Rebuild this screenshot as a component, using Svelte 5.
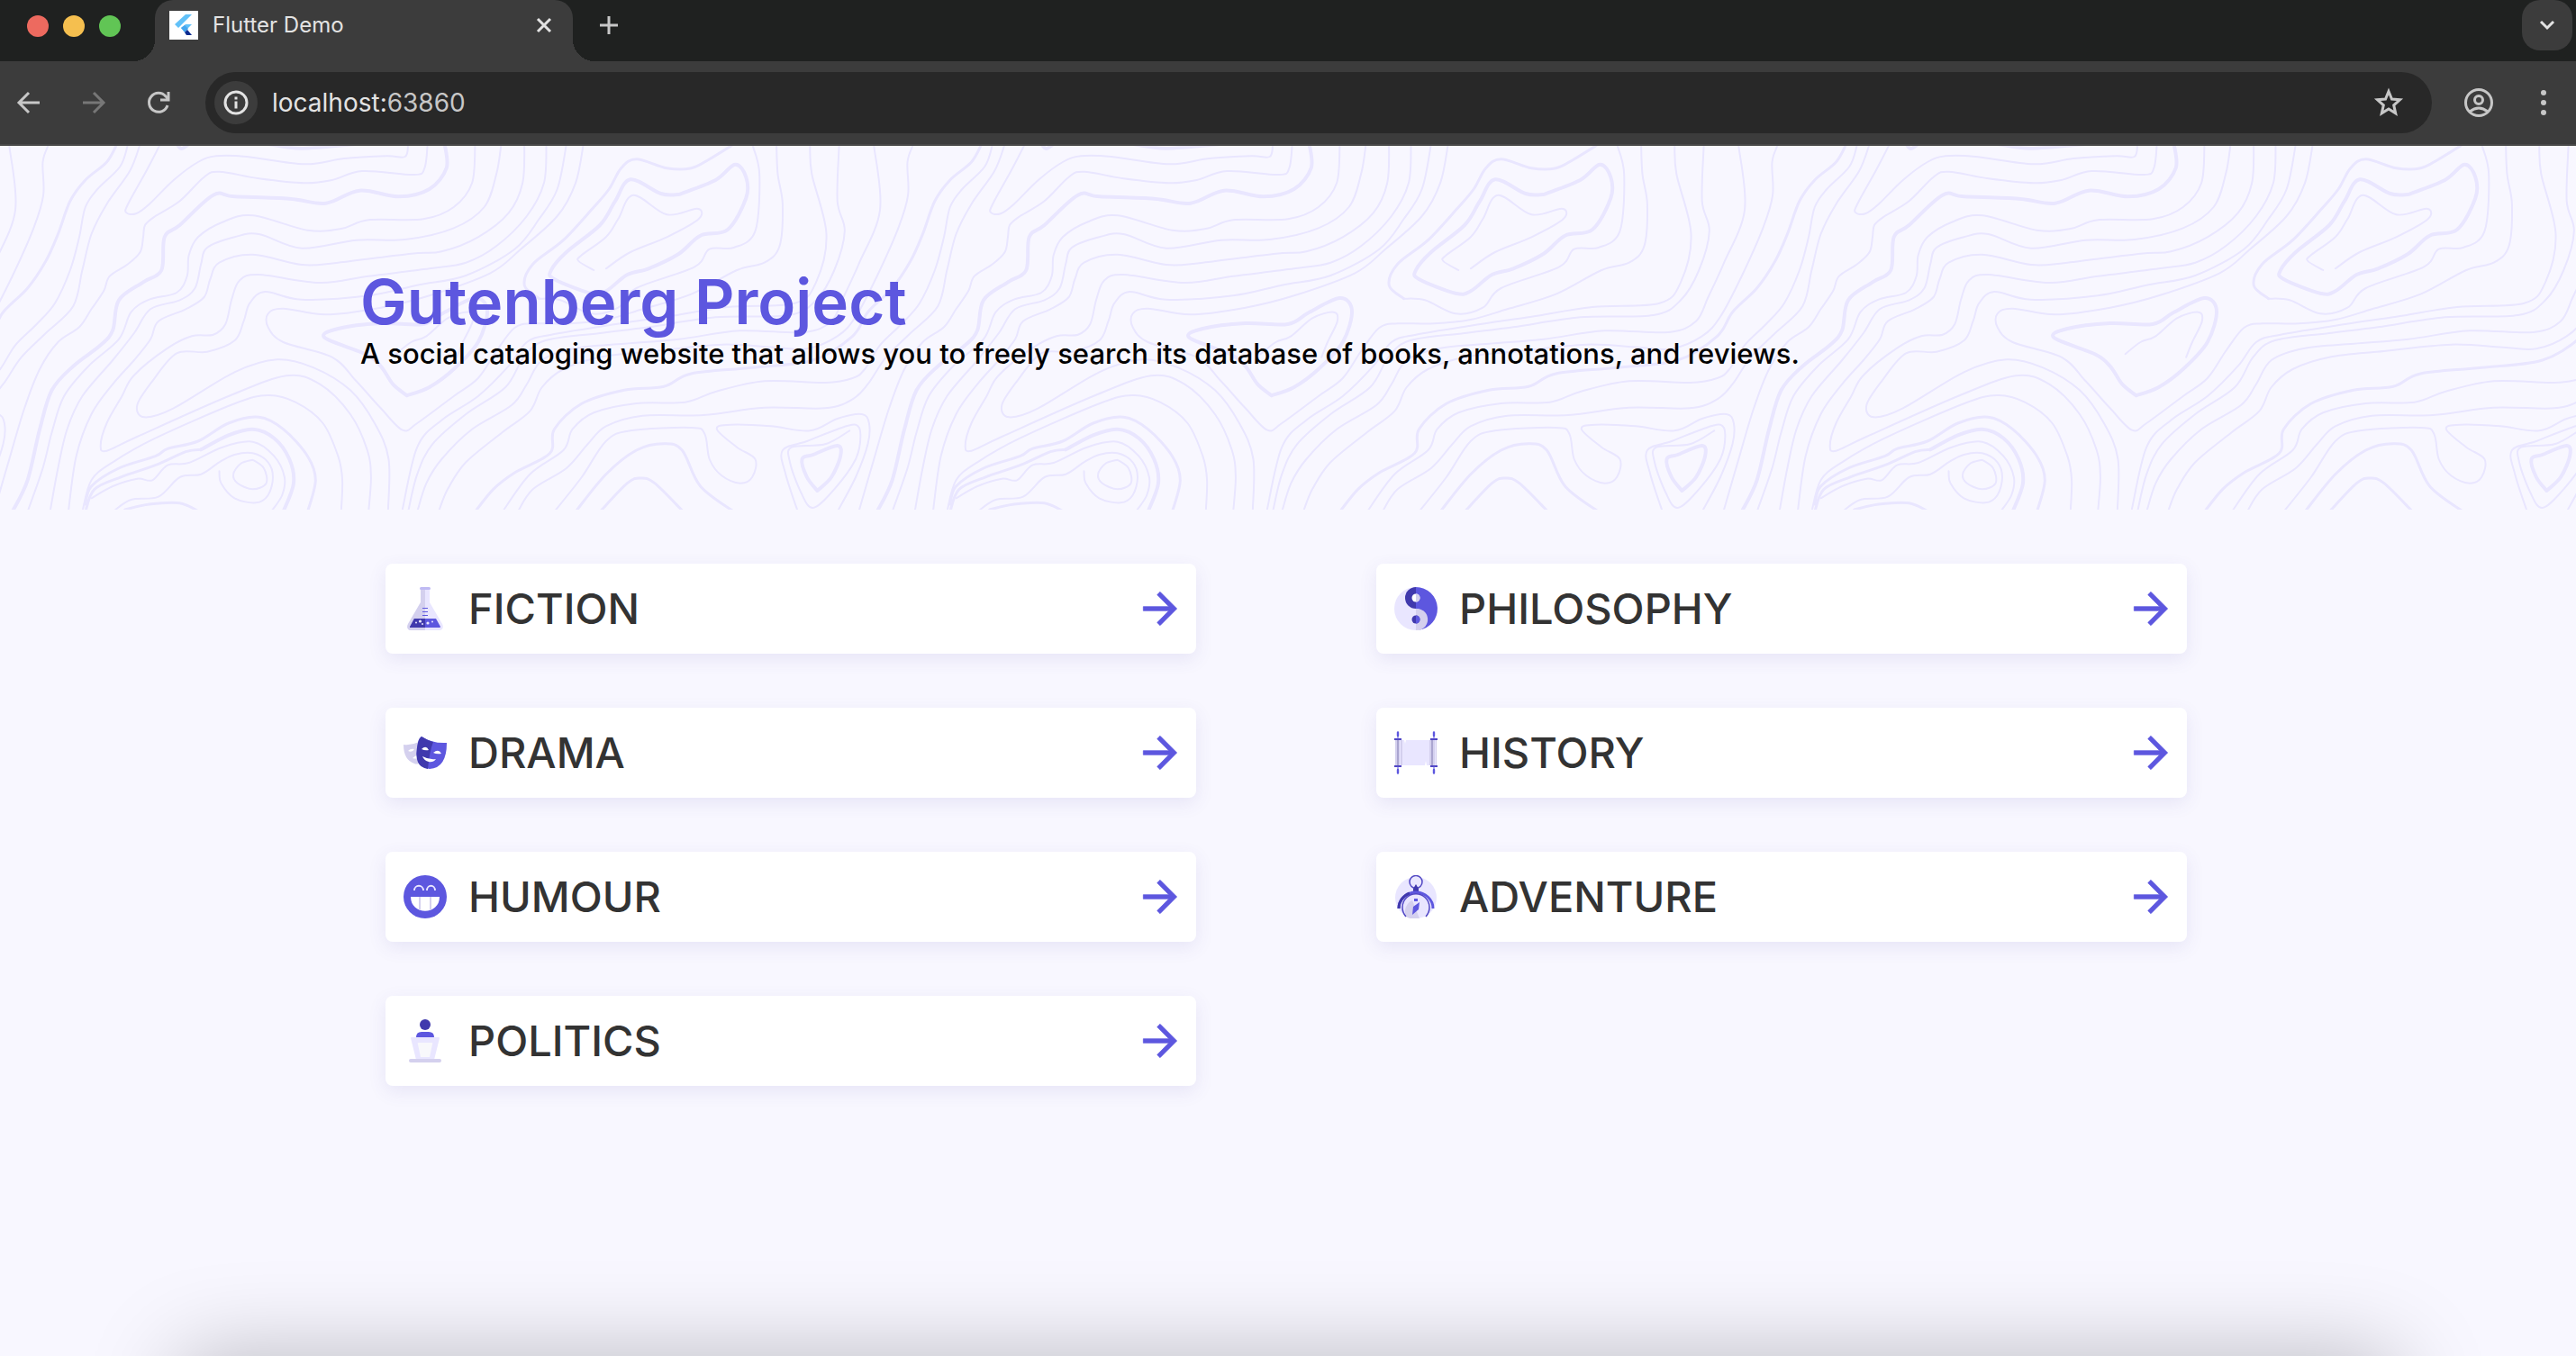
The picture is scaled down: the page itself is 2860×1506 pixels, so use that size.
<script>
  const left = ['fiction', 'drama', 'humour', 'politics'];
  const right = ['philosophy', 'history', 'adventure'];

  // Contour lines are plotted on a 1420 x 1212 grid and scaled to one 960 x 404 tile.
  const SX = 960 / 1420;
  const SY = 1 / 3;

  const lines = [
    [1, '1450,6 1460,220 1425,400 1400,510 1380,590 1335,627 1230,622 1130,650 1040,665 960,680 905,720 880,800 855,870 790,950 740,1050 715,1130 700,1225'],
    [1, '1515,0 1505,60 1506,170 1490,280 1455,440 1420,575 1390,640 1340,682 1290,678 1200,668 1090,690 1000,710 940,750 905,810 885,890 840,960 780,1060 750,1150 735,1225'],
    [2, '1627,0 1610,60 1575,120 1550,190 1530,300 1510,390 1480,480 1440,560 1415,640 1350,720 1250,745 1150,765 1105,808 1040,820 970,865 925,950 918,1030 860,1095 825,1150 795,1225'],
    [1, '1645,0 1632,75 1595,150 1575,210 1565,310 1550,420 1525,530 1495,600 1460,670 1435,750 1415,780 1370,795 1270,790 1190,825 1140,860 1060,864 990,895 955,950 940,1020 885,1100 840,1225'],
    [1, '1665,0 1648,90 1610,200 1585,300 1570,420 1555,540 1510,630 1470,710 1440,800 1415,850 1370,880 1270,878 1170,903 1070,905 1010,940 980,1000 945,1080 890,1150 865,1225'],
    [1, '278,0 255,90 225,200 222,228 238,232 260,200 300,120 340,60 370,40 420,42 515,67 580,48 650,40 680,42 685,0'],
    [1, '717,0 712,80 695,102 610,90 560,120 515,130 440,115 375,92 350,110 310,190 270,240 253,270 250,310 245,360 225,400 195,440 185,490 165,550 145,610 110,660 80,750 55,880 30,1050 5,1225'],
    [3, '35,1225 60,1120 80,950 100,820 135,740 180,670 200,620 210,520 250,460 280,420 285,310 310,270 365,170 400,175 490,182 550,197 605,155 670,175 720,150 748,80 745,0'],
    [1, '60,1225 85,1080 100,960 120,840 160,740 210,650 230,560 260,518 305,495 322,440 325,370 340,310 380,260 430,238 520,287 575,282 620,253 710,250 760,210 790,130 795,0'],
    [1, '97,1225 110,1080 125,950 150,840 200,720 235,630 262,550 310,520 335,480 345,400 355,345 400,310 440,300 510,347 600,320 680,318 760,280 810,210 830,100 838,0'],
    [1, '127,1225 140,1040 165,900 200,800 235,720 262,650 275,590 320,550 350,510 360,450 375,395 430,368 510,402 570,395 690,365 740,358 800,310 850,230 873,130 876,0'],
    [1, '912,0 908,130 880,240 830,340 780,395 720,415 620,440 540,462 440,435 408,455 395,520 385,600 365,635 330,640 290,680 235,770 215,840 190,930 180,1005 190,1022 240,975 390,840 485,772 540,800 590,900 618,1020 624,1110 620,1225'],
    [1, '945,0 930,150 900,250 860,350 780,438 700,470 620,505 510,518 450,492 425,530 415,590 400,655 355,692 305,697 265,790 240,870 252,910 300,880 400,760 470,718 530,745 590,820 630,930 653,1050 652,1225'],
    [1, '973,0 960,130 930,240 870,350 820,430 720,505 640,545 550,568 480,548 455,565 455,610 480,660 560,710 600,790 640,880 676,953 700,930 760,840 800,780 830,690 860,612 890,598 950,598 1010,585 1070,550 1150,500 1225,420 1270,395 1295,340 1300,200 1292,100 1290,0'],
    [1, '150,1225 165,1120 200,1060 270,980 400,865 455,837 500,860 545,930 570,1040 577,1120 575,1225'],
    [2, '155,1200 165,1140 210,1080 270,1040 290,1015 340,990 390,930 440,910 480,950 520,1040 533,1120 520,1225'],
    [3, '480,1225 497,1130 490,1050 465,980 430,950 390,970 345,1018'],
    [2, '345,1018 320,1025 270,1070 215,1108 170,1150 155,1225'],
    [1, '165,1180 200,1140 240,1115 265,1120 290,1070 325,1062 380,1010 430,992 465,1040 482,1110 478,1170 460,1225'],
    [1, '200,1225 230,1185 275,1175 310,1110 345,1100 375,1060 400,1035 430,1030 455,1060 463,1110 455,1170 435,1195 400,1180 378,1130 375,1090'],
    [1, '430,1052 448,1080 452,1130 430,1150 405,1130 398,1100 410,1065 430,1052'],
    [2, '220,1218 260,1200 310,1196 342,1225'],
    [3, '305,0 313,15 325,0'],
    [3, '455,0 510,14 600,0'],
    [3, '683,838 660,800 640,740 615,700 548,645 570,615 640,597 710,600 745,560 795,513 815,555 800,660 760,750 720,810 683,838'],
    [1, '665,700 690,660 715,640 750,580 785,560 791,590 775,660 765,710'],
    [2, '1220,0 1180,50 1150,80 1110,80 1060,50 1035,80 1015,150 990,210 940,320 890,400 876,470 900,515'],
    [3, '1130,168 1190,120 1222,68 1240,110 1240,180 1210,285 1165,305 1130,365 1080,415 1045,435 1010,490 985,497 925,450 920,420 945,360 1000,270 1025,190 1050,118 1100,165 1130,168'],
    [1, '900,515 935,520 985,565 1030,545 1060,480 1155,410 1180,350 1220,345 1255,290 1262,100 1250,0'],
    [1, '990,420 965,390 970,370 1010,310 1030,250 1055,170 1110,235 1160,215 1162,250 1110,310 1050,360 1010,415'],
    [1, '1345,0 1348,100 1372,300 1355,460 1320,530 1210,543 1110,575 1010,605 920,635 880,660 850,740 800,840 740,920 700,1010 675,1225'],
    [1, '1393,0 1390,190 1402,290 1385,420 1355,520 1310,570 1190,577 1080,610 1000,630 910,655 875,710 845,810 780,900 725,1000 700,1100 685,1225'],
    [1, '925,1225 970,1110 1010,990 1050,955 1150,945 1172,965 1180,1050 1200,1105 1230,1130 1250,1110 1255,1050 1225,1010 1192,950 1215,935 1280,940 1345,955 1390,915 1430,900 1442,930 1440,1000 1420,1110 1390,1225'],
    [2, '960,1225 1010,1100 1060,1020 1105,998 1135,1020 1165,1140 1220,1225'],
    [2, '1000,1225 1045,1130 1067,1113 1090,1130 1137,1225'],
    [1, '1325,1225 1305,1100 1300,1020 1340,990 1390,950 1420,935 1428,970 1420,1050 1385,1150 1350,1212 1330,1160 1312,1060 1315,1010 1370,1000 1410,955'],
    [3, '1357,1155 1340,1110 1332,1050 1350,1035 1390,1005 1395,1040 1380,1110 1357,1155']
  ];

  // Smooth curve through every plotted point.
  function curve(text) {
    const p = text.split(' ').map((pair) => {
      const [x, y] = pair.split(',').map(Number);
      return [x * SX, (y - 6) * SY];
    });
    let d = `M${p[0][0].toFixed(1)} ${p[0][1].toFixed(1)}`;
    for (let i = 0; i < p.length - 1; i++) {
      const a = p[i - 1] ?? p[i];
      const b = p[i];
      const c = p[i + 1];
      const e = p[i + 2] ?? c;
      const n = [b[0] + (c[0] - a[0]) / 6, b[1] + (c[1] - a[1]) / 6, c[0] - (e[0] - b[0]) / 6, c[1] - (e[1] - b[1]) / 6, c[0], c[1]];
      d += 'C' + n.map((v) => v.toFixed(1)).join(' ');
    }
    return d;
  }

  const contours = lines.map(([weight, text]) => ({ weight, d: curve(text) }));
</script>

{#snippet glyph(name)}
  <svg class="glyph" viewBox="0 0 48 48" aria-hidden="true">
    {#if name === 'fiction'}
      <path fill="#e9e6ff" d="M19 2h10v15l14 24c2 4 0 7-3 7H8c-3 0-5-3-3-7l14-24z" />
      <path fill="#d4d0ee" d="M19 2h5v46H8c-3 0-5-3-3-7l14-24z" />
      <rect x="18" y="0" width="12" height="3" rx="1.5" fill="#bfbaf3" />
      <path fill="#5d57df" d="M12 35h24l5 9q0 1-1 1H7z" />
      <path fill="#4039ad" d="M12 35h12v10H7v-1z" />
      <path stroke="#5d57df" d="M21 23.500h6M21 27.500h6M21 31.500h6" />
      <g fill="#e9e6ff"><circle cx="18.500" cy="38" r="1.600" /><circle cx="14" cy="39.500" r="1" /><circle cx="21" cy="41" r="1" /><circle cx="27" cy="40" r="1.600" /><circle cx="32" cy="38.500" r="1" /></g>
    {:else if name === 'drama'}
      <g transform="translate(0 6)">
        <path fill="#d4d0ee" d="M0 9q9 1 17-3v24q-3 1-5 0Q0 26 0 9z" />
        <path fill="#fff" d="M5 16q3-3 7-2-2 4-7 2zM10 24q3-3 6-3v3q-3 1-6 0z" />
        <path fill="#5d57df" d="M20 0q12 8 28 7 0 28-19 29Q10 34 16 7q1-5 4-7z" />
        <path fill="#4039ad" d="M20 0q6 4 13 6-4 10-6 30Q10 34 16 7q1-5 4-7z" />
        <path fill="#fff" d="M20 14q5-5 8 1-4 1-8-1zM33 18q6-5 9 1-5 1-9-1zM21 22q7 4 15 3-3 4-8 3-5-1-7-6z" />
      </g>
    {:else if name === 'humour'}
      <circle cx="24" cy="24" r="24" fill="#5d57df" />
      <path fill="none" stroke="#e9e6ff" stroke-width="1.800" d="M12 17c0-7 10-7 10 0M26 17c0-7 9-7 9 0" />
      <path fill="#fff" d="M8 24h32c0 21-32 21-32 0z" />
      <path stroke="#d4d0ee" stroke-width="2" d="M18 24v14.500M30 24v14.500" />
    {:else if name === 'politics'}
      <circle cx="24" cy="6" r="6" fill="#4039ad" />
      <path fill="#5d57df" d="M14 20q0-6 6-6h8q6 0 6 6z" />
      <path fill="#e9e6ff" d="M9 20h30q1 0 1 1l-6 24H14L8 21q0-1 1-1z" />
      <path fill="#f8f8fb" d="M17 26h14q2 0 1 2l-3 14H19l-3-14q-1-2 1-2z" />
      <rect x="6" y="44" width="36" height="4" rx="2" fill="#d4d0ee" />
    {:else if name === 'philosophy'}
      <circle cx="24" cy="24" r="24" fill="#e9e6ff" />
      <path fill="#5d57df" d="M24 0a24 24 0 0 1 3 47.800C40 43 37 24 24 24z" />
      <path fill="#4039ad" d="M24 0v24a12 12 0 0 1 0-24z" />
      <path fill="#d4d0ee" d="M24 24a12 12 0 0 1 3 23.800l-3 .2z" />
      <circle cx="24" cy="12" r="4.500" fill="#fff" /><path fill="#d4d0ee" d="M24 7.500a4.500 4.500 0 0 1 0 9z" />
      <circle cx="24" cy="36" r="4.500" fill="#4039ad" /><path fill="#5d57df" d="M24 31.500a4.500 4.500 0 0 1 0 9z" />
    {:else if name === 'history'}
      <path fill="#e9e6ff" d="M7 10h4l1 4 1-4h29v28h-6l-1-5-1 5H7z" />
      <path fill="#d4d0ee" d="M1 10h8v28H1zM39 10h8v28h-8z" />
      <path fill="#aaa5d0" d="M3 10h2v28H3zM41 10h2v28h-2z" />
      <path fill="#e9e6ff" d="M6 10h1v28H6zM45 10h1v28h-1z" />
      <path stroke="#5046c4" stroke-width="2" d="M0 9h8M40 9h8M0 39h8M40 39h8" />
      <path stroke="#5d57df" stroke-width="2.400" stroke-linecap="round" d="M4 1.500v3.500M44 1.500v3.500M4 43v3.500M44 43v3.500" />
      <path stroke="#5d57df" d="M4 5v4M44 5v4M4 39v4M44 39v4" />
    {:else}
      <circle cx="24" cy="25" r="23" fill="#e9e6ff" />
      <path fill="#d4d0ee" d="M13 46a14 14 0 0 1 7-18l8 20q-8 2-15-2z" />
      <circle cx="24" cy="7.500" r="7" fill="none" stroke="#5046c4" stroke-width="1.500" />
      <path fill="#4039ad" d="M21 15l3-5 3 5v5h-6z" />
      <path fill="none" stroke="#5d57df" stroke-width="3" d="M5 37a19 18 0 0 1 38 0" />
      <path fill="none" stroke="#4039ad" stroke-width="3" d="M5 37a19 18 0 0 1 12-17" />
      <path fill="none" stroke="#5046c4" stroke-width="1.500" d="M13 46a15 15 0 1 1 22 0" />
      <path fill="#5d57df" d="M22 26h4v3h-4zM28 30l-1 8-7 6 1-9z" />
    {/if}
  </svg>
{/snippet}

{#snippet cards(names)}
  <ul class="column">
    {#each names as name (name)}
      <li>
        <a class="card" href={`#${name}`}>
          {@render glyph(name)}
          <span class="label">{name.toUpperCase()}</span>
          <svg class="next" viewBox="0 0 24 24" aria-hidden="true"><path d="M12 4l-1.410 1.410L16.170 11H4v2h12.170l-5.580 5.590L12 20l8-8z" /></svg>
        </a>
      </li>
    {/each}
  </ul>
{/snippet}

<div class="window">
  <div class="tabs">
    <div class="lights"><i class="red"></i><i class="amber"></i><i class="green"></i></div>
    <div class="tab">
      <svg class="favicon" viewBox="0 0 32 32" aria-hidden="true">
        <path fill="#fff" d="M0 0h32v32H0z" />
        <path fill="#62c1f8" d="M18 4h7L10 19l-4-4zM18 15h7l-8 8-4-4z" />
        <path fill="#45a6ee" d="M13 19l4-3 4 4-4 4z" />
        <path fill="#0b2b8f" d="M17 24l3-3 5 6h-6z" />
      </svg>
      <span class="title">Flutter Demo</span>
      <button class="plain" aria-label="Close tab"><svg width="32" height="32" viewBox="0 0 32 32"><path d="M9 9l14 14M23 9L9 23" /></svg></button>
    </div>
    <button class="plain add" aria-label="New tab"><svg width="32" height="32" viewBox="0 0 32 32"><path d="M16 6v20M6 16h20" /></svg></button>
    <button class="search" aria-label="Search tabs"><svg width="32" height="32" viewBox="0 0 32 32"><path d="M9 12l7 7 7-7" /></svg></button>
  </div>

  <div class="toolbar">
    <div class="nav">
      <button class="plain" aria-label="Back"><svg width="32" height="32" viewBox="0 0 32 32"><path d="M28 16H6M16 5L5 16l11 11" /></svg></button>
      <button class="plain dim" aria-label="Forward"><svg width="32" height="32" viewBox="0 0 32 32"><path d="M4 16h22M16 5l11 11-11 11" /></svg></button>
      <button class="plain" aria-label="Reload"><svg width="32" height="32" viewBox="0 0 32 32"><path d="M26 19a10.500 10.500 0 1 1-2-10l3 3M27 4v9h-9" /></svg></button>
    </div>
    <div class="address">
      <button class="info" aria-label="Site information"><svg width="32" height="32" viewBox="0 0 32 32"><circle cx="16" cy="16" r="12" /><path d="M16 14.500v8M16 9.500v3" /></svg></button>
      <span class="url">localhost:<span class="port">63860</span></span>
      <button class="plain" aria-label="Bookmark"><svg width="36" height="36" viewBox="0 0 36 36"><path d="M18 5.500l3.500 8.500 9 .8-6.800 6 2 9L18 25l-7.700 4.800 2-9-6.800-6 9-.8z" /></svg></button>
    </div>
    <button class="plain profile" aria-label="Profile"><svg width="36" height="36" viewBox="0 0 36 36"><circle cx="18" cy="18" r="14.500" /><circle cx="18" cy="15" r="4.500" /><path d="M8 28q10-8 20 0" /></svg></button>
    <button class="plain menu" aria-label="Menu"><svg width="36" height="36" viewBox="0 0 36 36"><circle cx="18" cy="7" r="3" /><circle cx="18" cy="18" r="3" /><circle cx="18" cy="29" r="3" /></svg></button>
  </div>

  <main>
    <header class="hero">
      <svg class="contours" aria-hidden="true">
        <defs>
          <g id="tile">
            {#each contours as line}
              <path class={`w${line.weight}`} d={line.d} />
            {/each}
          </g>
          <pattern id="map" x="50%" y="0" width="960" height="404" patternUnits="userSpaceOnUse" patternTransform="translate(-480 0)">
            <use href="#tile" x="-960" /><use href="#tile" /><use href="#tile" x="960" />
          </pattern>
        </defs>
        <rect width="100%" height="100%" fill="url(#map)" />
      </svg>
      <div class="intro">
        <h1>Gutenberg Project</h1>
        <p>A social cataloging website that allows you to freely search its database of books, annotations, and reviews.</p>
      </div>
    </header>
    <nav class="genres" aria-label="Genres">
      {@render cards(left)}
      {@render cards(right)}
    </nav>
  </main>
  <div class="cast"></div>
</div>

<style>
  :global(body) { margin: 0; background: #f8f7ff; }
  .window { position: relative; display: flex; flex-direction: column; min-height: 100vh; overflow: hidden; background: #f8f7ff; font-family: Inter, 'Open Sans', sans-serif; }
  button { border: 0; padding: 0; margin: 0; font: inherit; }
  button svg { display: block; fill: none; stroke: currentColor; stroke-width: 3; }

  .tabs { display: flex; align-items: flex-start; height: 68px; background: #1f2120; }
  .lights { display: flex; gap: 16px; width: 142px; padding: 17px 0 0 30px; }
  .lights i { width: 24px; height: 24px; border-radius: 50%; }
  .red { background: #ed6a5f; }
  .amber { background: #f5bf4f; }
  .green { background: #61c555; }
  .tab { position: relative; display: flex; align-items: center; box-sizing: border-box; width: 464px; height: 68px; padding: 0 16px 12px; border-radius: 20px 20px 0 0; background: #3c3c3c; }
  .tab::before, .tab::after { content: ''; position: absolute; bottom: 0; width: 24px; height: 24px; }
  .tab::before { right: 100%; background: radial-gradient(circle at 0 0, transparent 24px, #3c3c3c 24px); }
  .tab::after { left: 100%; background: radial-gradient(circle at 100% 0, transparent 24px, #3c3c3c 24px); }
  .favicon { width: 32px; height: 32px; }
  .title { flex: 1; margin-left: 16px; font-size: 24px; line-height: 28px; color: #e3e3e3; }
  .plain { background: none; color: #c7c7c7; }
  .tab .plain { color: #e3e3e3; }
  .add { margin: 12px 0 0 24px; }
  .search { display: grid; place-items: center; width: 56px; height: 56px; margin: 0 4px 0 auto; border-radius: 20px; background: #3c3c3c; color: #e3e3e3; }

  .toolbar { display: flex; align-items: center; box-sizing: border-box; height: 94px; padding: 0 18px 0 16px; background: #3c3c3c; border-bottom: 2px solid #484848; }
  .nav { display: flex; gap: 40px; width: 212px; }
  .nav .dim { color: #777; }
  .address { flex: 1; display: flex; align-items: center; height: 68px; padding: 0 30px 0 10px; border-radius: 34px; background: #282828; }
  .info { display: grid; place-items: center; width: 48px; height: 48px; border-radius: 50%; background: #3c3c3c; color: #e3e3e3; }
  .url { flex: 1; margin-left: 16px; font-size: 28px; line-height: 36px; color: #e3e3e3; }
  .port { color: #c7c7c7; }
  .profile { margin-left: 34px; }
  .menu { margin-left: 36px; }
  .menu circle { fill: currentColor; stroke: none; }

  .hero { display: grid; min-height: 404px; }
  .hero > * { grid-area: 1 / 1; }
  .contours { width: 100%; height: 100%; }
  .contours path { fill: none; stroke: #e9e6ff; stroke-linecap: round; }
  .w1 { stroke-width: 2; }
  .w2 { stroke-width: 3; }
  .w3 { stroke-width: 4; }
  .intro { padding: 134px 400px 0; }
  h1 { margin: 0; font-size: 69px; line-height: 78px; font-weight: 600; color: #5d57df; }
  p { margin: 0; font-size: 31px; line-height: 38px; font-weight: 500; color: #000; }

  .genres { display: grid; grid-template-columns: repeat(2, minmax(0, 1fr)); gap: 200px; align-items: start; padding: 60px 432px 60px 428px; }
  .column { display: grid; gap: 60px; margin: 0; padding: 0; list-style: none; }
  .card { display: flex; align-items: center; height: 100px; padding: 0 12px 0 20px; border-radius: 8px; background: #fff; box-shadow: 0 6px 20px rgba(80, 70, 170, 0.1); color: #333; text-decoration: none; }
  .glyph { width: 48px; height: 48px; }
  .label { flex: 1; margin-left: 24px; font-size: 47px; line-height: 54px; font-weight: 500; }
  .next { width: 56px; height: 56px; fill: #5d57df; stroke: #5d57df; stroke-width: 0.3; }

  .cast { position: absolute; top: 100%; left: 200px; right: 200px; height: 200px; border-radius: 20px; box-shadow: 0 0 100px rgba(0, 0, 0, 0.25); }
</style>
